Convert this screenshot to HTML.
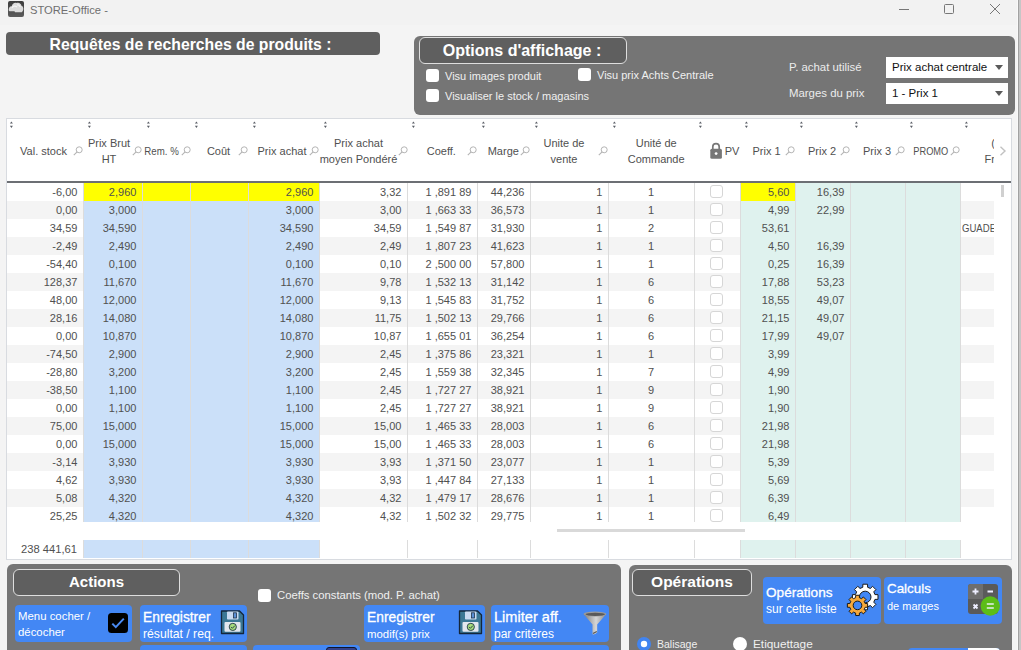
<!DOCTYPE html>
<html><head><meta charset="utf-8">
<style>
*{margin:0;padding:0;box-sizing:border-box}
html,body{width:1021px;height:650px;overflow:hidden;background:#f4f4f4;font-family:"Liberation Sans",sans-serif;position:relative}
.abs{position:absolute}
.bg{position:absolute}
.cell{position:absolute;height:18px;line-height:18px;font-size:11px;color:#505050;white-space:nowrap}
.pvcb{position:absolute;width:13px;height:13px;border:1px solid #d6d6d6;border-radius:3px;background:#fff}
.sort{position:absolute}
.srch{position:absolute}
.ht{position:absolute;width:120px;text-align:center;font-size:11px;line-height:16px;color:#505050;white-space:nowrap}
.hclip{position:absolute;overflow:hidden}
.panel{position:absolute;background:#757575;border-radius:6px}
.ttl{position:absolute;background:#5f5f5f;border:1px solid #dedede;border-radius:6px;color:#fff;font-weight:bold;text-align:center;white-space:nowrap}
.cb{position:absolute;width:13px;height:13px;background:#fff;border-radius:3px}
.lbl{position:absolute;color:#f0f0f0;font-size:11px;white-space:nowrap}
.btn{position:absolute;background:#4387f4;border-radius:4px;color:#fff;white-space:nowrap;overflow:hidden}
.btn .t1{position:absolute;font-size:14px;-webkit-text-stroke:0.3px #fff}
.btn .t2{position:absolute;font-size:12px}
.sel{position:absolute;background:#fff;font-size:11.5px;color:#111;white-space:nowrap}
.sel .arr{position:absolute;right:5px;top:8px;width:0;height:0;border-left:4px solid transparent;border-right:4px solid transparent;border-top:5px solid #5a5a5a}
</style></head>
<body>
<!-- title bar -->
<div class="bg" style="left:0;top:0;width:1021px;height:25px;background:#f2f2f2"></div>
<svg class="abs" style="left:8px;top:1px" width="16" height="16" viewBox="0 0 16 16">
 <defs><linearGradient id="ig" x1="0" x2="0" y1="0" y2="1"><stop offset="0" stop-color="#3c3c3c"/><stop offset="1" stop-color="#5c5c5c"/></linearGradient></defs><rect x="0" y="0" width="16" height="16" rx="2" fill="url(#ig)"/>
 <path d="M0.8 9.5 C0.3 7 1.8 5 3.8 5.2 C4.2 2.8 6.5 1.2 8.6 2 C10.8 1 13.2 2.5 13.4 4.8 C15.4 5.4 16 8.5 14.6 10.2 L13.8 11.2 L7 11.3 L6.5 10.2 L1.5 10.2Z" fill="#dcdcdc"/><path d="M4 7 C5 5 7 4.5 9 6 M9 4 C10.5 3.5 12 4.5 12 6" fill="none" stroke="#f4f4f4" stroke-width="1.2"/>
</svg>
<div class="abs" style="left:30px;top:3px;font-size:11.2px;color:#6f6f6f;line-height:14px">STORE-Office -</div>
<div class="bg" style="left:899px;top:9px;width:10px;height:1px;background:#777"></div>
<div class="bg" style="left:944px;top:4px;width:10px;height:10px;border:1px solid #777;border-radius:1.5px"></div>
<svg class="abs" style="left:989px;top:3px" width="12" height="12" viewBox="0 0 12 12"><path d="M1 1 L11 11 M11 1 L1 11" stroke="#777" stroke-width="1"/></svg>
<div class="bg" style="left:1017px;top:0;width:1px;height:650px;background:#f9f9f9"></div><div class="bg" style="left:1018px;top:0;width:1px;height:650px;background:#a2a2a2"></div><div class="bg" style="left:1019px;top:0;width:2px;height:650px;background:#c6c6c6"></div>

<!-- top header box -->
<div class="ttl" style="left:6px;top:32px;width:374px;height:23px;border:none;border-radius:4px;font-size:15.75px;line-height:25px;padding-right:5px">Requêtes de recherches de produits :</div>

<!-- options panel -->
<div class="panel" style="left:414px;top:36px;width:601px;height:79px"></div>
<div class="ttl" style="left:419px;top:37px;width:208px;height:27px;font-size:16px;line-height:25px;padding-right:2px">Options d'affichage :</div>
<div class="cb" style="left:426px;top:69px"></div>
<div class="lbl" style="left:445px;top:69px;line-height:14px">Visu images produit</div>
<div class="cb" style="left:578px;top:68px"></div>
<div class="lbl" style="left:597px;top:68px;line-height:14px">Visu prix Achts Centrale</div>
<div class="cb" style="left:426px;top:89px"></div>
<div class="lbl" style="left:445px;top:89px;line-height:14px">Visualiser le stock / magasins</div>
<div class="lbl" style="left:789px;top:60px;line-height:14px;font-size:11.4px;color:#ececec">P. achat utilisé</div>
<div class="lbl" style="left:789px;top:86px;line-height:14px;font-size:11.4px;color:#ececec">Marges du prix</div>
<div class="sel" style="left:886px;top:57px;width:122px;height:21px;line-height:20px;padding-left:6px">Prix achat centrale<div class="arr"></div></div>
<div class="sel" style="left:886px;top:83px;width:122px;height:21px;line-height:20px;padding-left:6px">1 - Prix 1<div class="arr"></div></div>

<!-- table -->
<div class="bg" style="left:6px;top:118px;width:1006px;height:442px;background:#fff;border:1px solid #d8dbe0"></div>
<div class="bg" style="left:7px;top:181px;width:1004px;height:2px;background:#6c6f74"></div>
<svg class="sort" style="left:9px;top:121px" width="5" height="8" viewBox="0 0 5 8"><path d="M0.9 2.6 L2.4 0.6 L3.9 2.6Z M0.9 4.8 L3.9 4.8 L2.4 7.1Z" fill="#5a5e66"/></svg>
<svg class="sort" style="left:87px;top:121px" width="5" height="8" viewBox="0 0 5 8"><path d="M0.9 2.6 L2.4 0.6 L3.9 2.6Z M0.9 4.8 L3.9 4.8 L2.4 7.1Z" fill="#5a5e66"/></svg>
<svg class="sort" style="left:146px;top:121px" width="5" height="8" viewBox="0 0 5 8"><path d="M0.9 2.6 L2.4 0.6 L3.9 2.6Z M0.9 4.8 L3.9 4.8 L2.4 7.1Z" fill="#5a5e66"/></svg>
<svg class="sort" style="left:194px;top:121px" width="5" height="8" viewBox="0 0 5 8"><path d="M0.9 2.6 L2.4 0.6 L3.9 2.6Z M0.9 4.8 L3.9 4.8 L2.4 7.1Z" fill="#5a5e66"/></svg>
<svg class="sort" style="left:252px;top:121px" width="5" height="8" viewBox="0 0 5 8"><path d="M0.9 2.6 L2.4 0.6 L3.9 2.6Z M0.9 4.8 L3.9 4.8 L2.4 7.1Z" fill="#5a5e66"/></svg>
<svg class="sort" style="left:323px;top:121px" width="5" height="8" viewBox="0 0 5 8"><path d="M0.9 2.6 L2.4 0.6 L3.9 2.6Z M0.9 4.8 L3.9 4.8 L2.4 7.1Z" fill="#5a5e66"/></svg>
<svg class="sort" style="left:411px;top:121px" width="5" height="8" viewBox="0 0 5 8"><path d="M0.9 2.6 L2.4 0.6 L3.9 2.6Z M0.9 4.8 L3.9 4.8 L2.4 7.1Z" fill="#5a5e66"/></svg>
<svg class="sort" style="left:481px;top:121px" width="5" height="8" viewBox="0 0 5 8"><path d="M0.9 2.6 L2.4 0.6 L3.9 2.6Z M0.9 4.8 L3.9 4.8 L2.4 7.1Z" fill="#5a5e66"/></svg>
<svg class="sort" style="left:534px;top:121px" width="5" height="8" viewBox="0 0 5 8"><path d="M0.9 2.6 L2.4 0.6 L3.9 2.6Z M0.9 4.8 L3.9 4.8 L2.4 7.1Z" fill="#5a5e66"/></svg>
<svg class="sort" style="left:612px;top:121px" width="5" height="8" viewBox="0 0 5 8"><path d="M0.9 2.6 L2.4 0.6 L3.9 2.6Z M0.9 4.8 L3.9 4.8 L2.4 7.1Z" fill="#5a5e66"/></svg>
<svg class="sort" style="left:698px;top:121px" width="5" height="8" viewBox="0 0 5 8"><path d="M0.9 2.6 L2.4 0.6 L3.9 2.6Z M0.9 4.8 L3.9 4.8 L2.4 7.1Z" fill="#5a5e66"/></svg>
<svg class="sort" style="left:744px;top:121px" width="5" height="8" viewBox="0 0 5 8"><path d="M0.9 2.6 L2.4 0.6 L3.9 2.6Z M0.9 4.8 L3.9 4.8 L2.4 7.1Z" fill="#5a5e66"/></svg>
<svg class="sort" style="left:799px;top:121px" width="5" height="8" viewBox="0 0 5 8"><path d="M0.9 2.6 L2.4 0.6 L3.9 2.6Z M0.9 4.8 L3.9 4.8 L2.4 7.1Z" fill="#5a5e66"/></svg>
<svg class="sort" style="left:854px;top:121px" width="5" height="8" viewBox="0 0 5 8"><path d="M0.9 2.6 L2.4 0.6 L3.9 2.6Z M0.9 4.8 L3.9 4.8 L2.4 7.1Z" fill="#5a5e66"/></svg>
<svg class="sort" style="left:909px;top:121px" width="5" height="8" viewBox="0 0 5 8"><path d="M0.9 2.6 L2.4 0.6 L3.9 2.6Z M0.9 4.8 L3.9 4.8 L2.4 7.1Z" fill="#5a5e66"/></svg>
<svg class="sort" style="left:964px;top:121px" width="5" height="8" viewBox="0 0 5 8"><path d="M0.9 2.6 L2.4 0.6 L3.9 2.6Z M0.9 4.8 L3.9 4.8 L2.4 7.1Z" fill="#5a5e66"/></svg>
<div class="ht" style="left:-16.5px;top:143px;">Val. stock</div>
<div class="ht" style="left:49px;top:135px">Prix Brut<br>HT</div>
<div class="ht" style="left:102px;top:143px;"><span style='display:inline-block;transform:scaleX(0.88)'>Rem. %</span></div>
<div class="ht" style="left:158.5px;top:143px;">Coût</div>
<div class="ht" style="left:222px;top:143px;">Prix achat</div>
<div class="ht" style="left:298.5px;top:135px">Prix achat<br>moyen Pondéré</div>
<div class="ht" style="left:381.3px;top:143px;">Coeff.</div>
<div class="ht" style="left:443.3px;top:143px;">Marge</div>
<div class="ht" style="left:504px;top:135px">Unite de<br>vente</div>
<div class="ht" style="left:596.2px;top:135px">Unité de<br>Commande</div>
<div class="ht" style="left:672px;top:143px;">PV</div>
<div class="ht" style="left:706.6px;top:143px;">Prix 1</div>
<div class="ht" style="left:762px;top:143px;">Prix 2</div>
<div class="ht" style="left:817px;top:143px;">Prix 3</div>
<div class="ht" style="left:871px;top:143px;"><span style='display:inline-block;transform:scaleX(0.84)'>PROMO</span></div>
<svg class="srch" style="left:73px;top:146px" width="10" height="10" viewBox="0 0 10 10"><circle cx="6.2" cy="3.8" r="3" fill="none" stroke="#b4b4b4" stroke-width="1"/><path d="M4.1 5.9 L0.8 9.2" stroke="#b4b4b4" stroke-width="1.1"/></svg>
<svg class="srch" style="left:132px;top:146px" width="10" height="10" viewBox="0 0 10 10"><circle cx="6.2" cy="3.8" r="3" fill="none" stroke="#b4b4b4" stroke-width="1"/><path d="M4.1 5.9 L0.8 9.2" stroke="#b4b4b4" stroke-width="1.1"/></svg>
<svg class="srch" style="left:180.5px;top:146px" width="10" height="10" viewBox="0 0 10 10"><circle cx="6.2" cy="3.8" r="3" fill="none" stroke="#b4b4b4" stroke-width="1"/><path d="M4.1 5.9 L0.8 9.2" stroke="#b4b4b4" stroke-width="1.1"/></svg>
<svg class="srch" style="left:238px;top:146px" width="10" height="10" viewBox="0 0 10 10"><circle cx="6.2" cy="3.8" r="3" fill="none" stroke="#b4b4b4" stroke-width="1"/><path d="M4.1 5.9 L0.8 9.2" stroke="#b4b4b4" stroke-width="1.1"/></svg>
<svg class="srch" style="left:309.3px;top:146px" width="10" height="10" viewBox="0 0 10 10"><circle cx="6.2" cy="3.8" r="3" fill="none" stroke="#b4b4b4" stroke-width="1"/><path d="M4.1 5.9 L0.8 9.2" stroke="#b4b4b4" stroke-width="1.1"/></svg>
<svg class="srch" style="left:397.5px;top:146px" width="10" height="10" viewBox="0 0 10 10"><circle cx="6.2" cy="3.8" r="3" fill="none" stroke="#b4b4b4" stroke-width="1"/><path d="M4.1 5.9 L0.8 9.2" stroke="#b4b4b4" stroke-width="1.1"/></svg>
<svg class="srch" style="left:467px;top:146px" width="10" height="10" viewBox="0 0 10 10"><circle cx="6.2" cy="3.8" r="3" fill="none" stroke="#b4b4b4" stroke-width="1"/><path d="M4.1 5.9 L0.8 9.2" stroke="#b4b4b4" stroke-width="1.1"/></svg>
<svg class="srch" style="left:520px;top:146px" width="10" height="10" viewBox="0 0 10 10"><circle cx="6.2" cy="3.8" r="3" fill="none" stroke="#b4b4b4" stroke-width="1"/><path d="M4.1 5.9 L0.8 9.2" stroke="#b4b4b4" stroke-width="1.1"/></svg>
<svg class="srch" style="left:598.3px;top:146px" width="10" height="10" viewBox="0 0 10 10"><circle cx="6.2" cy="3.8" r="3" fill="none" stroke="#b4b4b4" stroke-width="1"/><path d="M4.1 5.9 L0.8 9.2" stroke="#b4b4b4" stroke-width="1.1"/></svg>
<svg class="srch" style="left:785px;top:146px" width="10" height="10" viewBox="0 0 10 10"><circle cx="6.2" cy="3.8" r="3" fill="none" stroke="#b4b4b4" stroke-width="1"/><path d="M4.1 5.9 L0.8 9.2" stroke="#b4b4b4" stroke-width="1.1"/></svg>
<svg class="srch" style="left:840px;top:146px" width="10" height="10" viewBox="0 0 10 10"><circle cx="6.2" cy="3.8" r="3" fill="none" stroke="#b4b4b4" stroke-width="1"/><path d="M4.1 5.9 L0.8 9.2" stroke="#b4b4b4" stroke-width="1.1"/></svg>
<svg class="srch" style="left:895px;top:146px" width="10" height="10" viewBox="0 0 10 10"><circle cx="6.2" cy="3.8" r="3" fill="none" stroke="#b4b4b4" stroke-width="1"/><path d="M4.1 5.9 L0.8 9.2" stroke="#b4b4b4" stroke-width="1.1"/></svg>
<svg class="srch" style="left:950px;top:146px" width="10" height="10" viewBox="0 0 10 10"><circle cx="6.2" cy="3.8" r="3" fill="none" stroke="#b4b4b4" stroke-width="1"/><path d="M4.1 5.9 L0.8 9.2" stroke="#b4b4b4" stroke-width="1.1"/></svg>
<div class="hclip" style="left:961px;top:119px;width:33px;height:62px"><div class="ht" style="left:-30px;top:16px;width:64px;text-align:right">(<br>Fr</div></div>
<svg class="srch" style="left:999px;top:146px" width="8" height="10" viewBox="0 0 8 10"><path d="M1.5 0.8 L6 5 L1.5 9.2" fill="none" stroke="#c2c2c2" stroke-width="1.4"/></svg>
<svg class="srch" style="left:709px;top:142px" width="14" height="18" viewBox="0 0 14 18"><path d="M3.8 7 V4.8 A3.2 3.2 0 0 1 10.2 4.8 V7" fill="none" stroke="#777" stroke-width="1.7"/><rect x="1.3" y="6.8" width="11.6" height="10" rx="1.5" fill="#777"/><circle cx="7.1" cy="11.6" r="1.4" fill="#fff"/></svg>
<div class="bg" style="left:84px;top:183px;width:235px;height:18px;background:#ffff00"></div>
<div class="bg" style="left:741px;top:183px;width:54px;height:18px;background:#ffff00"></div>
<div class="bg" style="left:7px;top:201px;width:987px;height:18px;background:#f4f4f4"></div>
<div class="bg" style="left:7px;top:237px;width:987px;height:18px;background:#f4f4f4"></div>
<div class="bg" style="left:7px;top:273px;width:987px;height:18px;background:#f4f4f4"></div>
<div class="bg" style="left:7px;top:309px;width:987px;height:18px;background:#f4f4f4"></div>
<div class="bg" style="left:7px;top:345px;width:987px;height:18px;background:#f4f4f4"></div>
<div class="bg" style="left:7px;top:381px;width:987px;height:18px;background:#f4f4f4"></div>
<div class="bg" style="left:7px;top:417px;width:987px;height:18px;background:#f4f4f4"></div>
<div class="bg" style="left:7px;top:453px;width:987px;height:18px;background:#f4f4f4"></div>
<div class="bg" style="left:7px;top:489px;width:987px;height:18px;background:#f4f4f4"></div>
<div class="bg" style="left:84px;top:201px;width:235px;height:321px;background:#cbe0f9"></div>
<div class="bg" style="left:741px;top:201px;width:54px;height:321px;background:#dff2ee"></div>
<div class="bg" style="left:796px;top:183px;width:164px;height:339px;background:#dff2ee"></div>
<div class="bg" style="left:84px;top:540px;width:235px;height:18px;background:#cbe0f9"></div>
<div class="bg" style="left:741px;top:540px;width:219px;height:18px;background:#dff2ee"></div>
<div class="bg" style="left:83px;top:183px;width:1px;height:339px;background:#dcdcdc"></div>
<div class="bg" style="left:83px;top:540px;width:1px;height:18px;background:#dcdcdc"></div>
<div class="bg" style="left:142px;top:183px;width:1px;height:339px;background:#dcdcdc"></div>
<div class="bg" style="left:142px;top:540px;width:1px;height:18px;background:#dcdcdc"></div>
<div class="bg" style="left:190px;top:183px;width:1px;height:339px;background:#dcdcdc"></div>
<div class="bg" style="left:190px;top:540px;width:1px;height:18px;background:#dcdcdc"></div>
<div class="bg" style="left:248px;top:183px;width:1px;height:339px;background:#dcdcdc"></div>
<div class="bg" style="left:248px;top:540px;width:1px;height:18px;background:#dcdcdc"></div>
<div class="bg" style="left:319px;top:183px;width:1px;height:339px;background:#dcdcdc"></div>
<div class="bg" style="left:319px;top:540px;width:1px;height:18px;background:#dcdcdc"></div>
<div class="bg" style="left:407px;top:183px;width:1px;height:339px;background:#dcdcdc"></div>
<div class="bg" style="left:407px;top:540px;width:1px;height:18px;background:#dcdcdc"></div>
<div class="bg" style="left:477px;top:183px;width:1px;height:339px;background:#dcdcdc"></div>
<div class="bg" style="left:477px;top:540px;width:1px;height:18px;background:#dcdcdc"></div>
<div class="bg" style="left:530px;top:183px;width:1px;height:339px;background:#dcdcdc"></div>
<div class="bg" style="left:530px;top:540px;width:1px;height:18px;background:#dcdcdc"></div>
<div class="bg" style="left:608px;top:183px;width:1px;height:339px;background:#dcdcdc"></div>
<div class="bg" style="left:608px;top:540px;width:1px;height:18px;background:#dcdcdc"></div>
<div class="bg" style="left:694px;top:183px;width:1px;height:339px;background:#dcdcdc"></div>
<div class="bg" style="left:694px;top:540px;width:1px;height:18px;background:#dcdcdc"></div>
<div class="bg" style="left:740px;top:183px;width:1px;height:339px;background:#dcdcdc"></div>
<div class="bg" style="left:740px;top:540px;width:1px;height:18px;background:#dcdcdc"></div>
<div class="bg" style="left:795px;top:183px;width:1px;height:339px;background:#dcdcdc"></div>
<div class="bg" style="left:795px;top:540px;width:1px;height:18px;background:#dcdcdc"></div>
<div class="bg" style="left:850px;top:183px;width:1px;height:339px;background:#dcdcdc"></div>
<div class="bg" style="left:850px;top:540px;width:1px;height:18px;background:#dcdcdc"></div>
<div class="bg" style="left:905px;top:183px;width:1px;height:339px;background:#dcdcdc"></div>
<div class="bg" style="left:905px;top:540px;width:1px;height:18px;background:#dcdcdc"></div>
<div class="bg" style="left:960px;top:183px;width:1px;height:339px;background:#dcdcdc"></div>
<div class="bg" style="left:960px;top:540px;width:1px;height:18px;background:#dcdcdc"></div>
<div class="cell" style="left:7px;top:183px;width:70.4px;text-align:right">-6,00</div>
<div class="cell" style="left:83px;top:183px;width:53.4px;text-align:right">2,960</div>
<div class="cell" style="left:248px;top:183px;width:65.4px;text-align:right">2,960</div>
<div class="cell" style="left:319px;top:183px;width:82.4px;text-align:right">3,32</div>
<div class="cell" style="left:407px;top:183px;width:64.4px;text-align:right">1 ,891 89</div>
<div class="cell" style="left:477px;top:183px;width:47.4px;text-align:right">44,236</div>
<div class="cell" style="left:530px;top:183px;width:72.4px;text-align:right">1</div>
<div class="cell" style="left:608px;top:183px;width:86px;text-align:center">1</div>
<div class="cell" style="left:740px;top:183px;width:49.4px;text-align:right">5,60</div>
<div class="cell" style="left:795px;top:183px;width:49.4px;text-align:right">16,39</div>
<div class="pvcb" style="left:710px;top:185px"></div>
<div class="cell" style="left:7px;top:201px;width:70.4px;text-align:right">0,00</div>
<div class="cell" style="left:83px;top:201px;width:53.4px;text-align:right">3,000</div>
<div class="cell" style="left:248px;top:201px;width:65.4px;text-align:right">3,000</div>
<div class="cell" style="left:319px;top:201px;width:82.4px;text-align:right">3,00</div>
<div class="cell" style="left:407px;top:201px;width:64.4px;text-align:right">1 ,663 33</div>
<div class="cell" style="left:477px;top:201px;width:47.4px;text-align:right">36,573</div>
<div class="cell" style="left:530px;top:201px;width:72.4px;text-align:right">1</div>
<div class="cell" style="left:608px;top:201px;width:86px;text-align:center">1</div>
<div class="cell" style="left:740px;top:201px;width:49.4px;text-align:right">4,99</div>
<div class="cell" style="left:795px;top:201px;width:49.4px;text-align:right">22,99</div>
<div class="pvcb" style="left:710px;top:203px"></div>
<div class="cell" style="left:7px;top:219px;width:70.4px;text-align:right">34,59</div>
<div class="cell" style="left:83px;top:219px;width:53.4px;text-align:right">34,590</div>
<div class="cell" style="left:248px;top:219px;width:65.4px;text-align:right">34,590</div>
<div class="cell" style="left:319px;top:219px;width:82.4px;text-align:right">34,59</div>
<div class="cell" style="left:407px;top:219px;width:64.4px;text-align:right">1 ,549 87</div>
<div class="cell" style="left:477px;top:219px;width:47.4px;text-align:right">31,930</div>
<div class="cell" style="left:530px;top:219px;width:72.4px;text-align:right">1</div>
<div class="cell" style="left:608px;top:219px;width:86px;text-align:center">2</div>
<div class="cell" style="left:740px;top:219px;width:49.4px;text-align:right">53,61</div>
<div class="cell" style="left:962px;top:219px;width:32px;text-align:left;overflow:hidden"><span style="display:inline-block;transform:scaleX(0.87);transform-origin:0 0">GUADE</span></div>
<div class="pvcb" style="left:710px;top:221px"></div>
<div class="cell" style="left:7px;top:237px;width:70.4px;text-align:right">-2,49</div>
<div class="cell" style="left:83px;top:237px;width:53.4px;text-align:right">2,490</div>
<div class="cell" style="left:248px;top:237px;width:65.4px;text-align:right">2,490</div>
<div class="cell" style="left:319px;top:237px;width:82.4px;text-align:right">2,49</div>
<div class="cell" style="left:407px;top:237px;width:64.4px;text-align:right">1 ,807 23</div>
<div class="cell" style="left:477px;top:237px;width:47.4px;text-align:right">41,623</div>
<div class="cell" style="left:530px;top:237px;width:72.4px;text-align:right">1</div>
<div class="cell" style="left:608px;top:237px;width:86px;text-align:center">1</div>
<div class="cell" style="left:740px;top:237px;width:49.4px;text-align:right">4,50</div>
<div class="cell" style="left:795px;top:237px;width:49.4px;text-align:right">16,39</div>
<div class="pvcb" style="left:710px;top:239px"></div>
<div class="cell" style="left:7px;top:255px;width:70.4px;text-align:right">-54,40</div>
<div class="cell" style="left:83px;top:255px;width:53.4px;text-align:right">0,100</div>
<div class="cell" style="left:248px;top:255px;width:65.4px;text-align:right">0,100</div>
<div class="cell" style="left:319px;top:255px;width:82.4px;text-align:right">0,10</div>
<div class="cell" style="left:407px;top:255px;width:64.4px;text-align:right">2 ,500 00</div>
<div class="cell" style="left:477px;top:255px;width:47.4px;text-align:right">57,800</div>
<div class="cell" style="left:530px;top:255px;width:72.4px;text-align:right">1</div>
<div class="cell" style="left:608px;top:255px;width:86px;text-align:center">1</div>
<div class="cell" style="left:740px;top:255px;width:49.4px;text-align:right">0,25</div>
<div class="cell" style="left:795px;top:255px;width:49.4px;text-align:right">16,39</div>
<div class="pvcb" style="left:710px;top:257px"></div>
<div class="cell" style="left:7px;top:273px;width:70.4px;text-align:right">128,37</div>
<div class="cell" style="left:83px;top:273px;width:53.4px;text-align:right">11,670</div>
<div class="cell" style="left:248px;top:273px;width:65.4px;text-align:right">11,670</div>
<div class="cell" style="left:319px;top:273px;width:82.4px;text-align:right">9,78</div>
<div class="cell" style="left:407px;top:273px;width:64.4px;text-align:right">1 ,532 13</div>
<div class="cell" style="left:477px;top:273px;width:47.4px;text-align:right">31,142</div>
<div class="cell" style="left:530px;top:273px;width:72.4px;text-align:right">1</div>
<div class="cell" style="left:608px;top:273px;width:86px;text-align:center">6</div>
<div class="cell" style="left:740px;top:273px;width:49.4px;text-align:right">17,88</div>
<div class="cell" style="left:795px;top:273px;width:49.4px;text-align:right">53,23</div>
<div class="pvcb" style="left:710px;top:275px"></div>
<div class="cell" style="left:7px;top:291px;width:70.4px;text-align:right">48,00</div>
<div class="cell" style="left:83px;top:291px;width:53.4px;text-align:right">12,000</div>
<div class="cell" style="left:248px;top:291px;width:65.4px;text-align:right">12,000</div>
<div class="cell" style="left:319px;top:291px;width:82.4px;text-align:right">9,13</div>
<div class="cell" style="left:407px;top:291px;width:64.4px;text-align:right">1 ,545 83</div>
<div class="cell" style="left:477px;top:291px;width:47.4px;text-align:right">31,752</div>
<div class="cell" style="left:530px;top:291px;width:72.4px;text-align:right">1</div>
<div class="cell" style="left:608px;top:291px;width:86px;text-align:center">6</div>
<div class="cell" style="left:740px;top:291px;width:49.4px;text-align:right">18,55</div>
<div class="cell" style="left:795px;top:291px;width:49.4px;text-align:right">49,07</div>
<div class="pvcb" style="left:710px;top:293px"></div>
<div class="cell" style="left:7px;top:309px;width:70.4px;text-align:right">28,16</div>
<div class="cell" style="left:83px;top:309px;width:53.4px;text-align:right">14,080</div>
<div class="cell" style="left:248px;top:309px;width:65.4px;text-align:right">14,080</div>
<div class="cell" style="left:319px;top:309px;width:82.4px;text-align:right">11,75</div>
<div class="cell" style="left:407px;top:309px;width:64.4px;text-align:right">1 ,502 13</div>
<div class="cell" style="left:477px;top:309px;width:47.4px;text-align:right">29,766</div>
<div class="cell" style="left:530px;top:309px;width:72.4px;text-align:right">1</div>
<div class="cell" style="left:608px;top:309px;width:86px;text-align:center">6</div>
<div class="cell" style="left:740px;top:309px;width:49.4px;text-align:right">21,15</div>
<div class="cell" style="left:795px;top:309px;width:49.4px;text-align:right">49,07</div>
<div class="pvcb" style="left:710px;top:311px"></div>
<div class="cell" style="left:7px;top:327px;width:70.4px;text-align:right">0,00</div>
<div class="cell" style="left:83px;top:327px;width:53.4px;text-align:right">10,870</div>
<div class="cell" style="left:248px;top:327px;width:65.4px;text-align:right">10,870</div>
<div class="cell" style="left:319px;top:327px;width:82.4px;text-align:right">10,87</div>
<div class="cell" style="left:407px;top:327px;width:64.4px;text-align:right">1 ,655 01</div>
<div class="cell" style="left:477px;top:327px;width:47.4px;text-align:right">36,254</div>
<div class="cell" style="left:530px;top:327px;width:72.4px;text-align:right">1</div>
<div class="cell" style="left:608px;top:327px;width:86px;text-align:center">6</div>
<div class="cell" style="left:740px;top:327px;width:49.4px;text-align:right">17,99</div>
<div class="cell" style="left:795px;top:327px;width:49.4px;text-align:right">49,07</div>
<div class="pvcb" style="left:710px;top:329px"></div>
<div class="cell" style="left:7px;top:345px;width:70.4px;text-align:right">-74,50</div>
<div class="cell" style="left:83px;top:345px;width:53.4px;text-align:right">2,900</div>
<div class="cell" style="left:248px;top:345px;width:65.4px;text-align:right">2,900</div>
<div class="cell" style="left:319px;top:345px;width:82.4px;text-align:right">2,45</div>
<div class="cell" style="left:407px;top:345px;width:64.4px;text-align:right">1 ,375 86</div>
<div class="cell" style="left:477px;top:345px;width:47.4px;text-align:right">23,321</div>
<div class="cell" style="left:530px;top:345px;width:72.4px;text-align:right">1</div>
<div class="cell" style="left:608px;top:345px;width:86px;text-align:center">1</div>
<div class="cell" style="left:740px;top:345px;width:49.4px;text-align:right">3,99</div>
<div class="pvcb" style="left:710px;top:347px"></div>
<div class="cell" style="left:7px;top:363px;width:70.4px;text-align:right">-28,80</div>
<div class="cell" style="left:83px;top:363px;width:53.4px;text-align:right">3,200</div>
<div class="cell" style="left:248px;top:363px;width:65.4px;text-align:right">3,200</div>
<div class="cell" style="left:319px;top:363px;width:82.4px;text-align:right">2,45</div>
<div class="cell" style="left:407px;top:363px;width:64.4px;text-align:right">1 ,559 38</div>
<div class="cell" style="left:477px;top:363px;width:47.4px;text-align:right">32,345</div>
<div class="cell" style="left:530px;top:363px;width:72.4px;text-align:right">1</div>
<div class="cell" style="left:608px;top:363px;width:86px;text-align:center">7</div>
<div class="cell" style="left:740px;top:363px;width:49.4px;text-align:right">4,99</div>
<div class="pvcb" style="left:710px;top:365px"></div>
<div class="cell" style="left:7px;top:381px;width:70.4px;text-align:right">-38,50</div>
<div class="cell" style="left:83px;top:381px;width:53.4px;text-align:right">1,100</div>
<div class="cell" style="left:248px;top:381px;width:65.4px;text-align:right">1,100</div>
<div class="cell" style="left:319px;top:381px;width:82.4px;text-align:right">2,45</div>
<div class="cell" style="left:407px;top:381px;width:64.4px;text-align:right">1 ,727 27</div>
<div class="cell" style="left:477px;top:381px;width:47.4px;text-align:right">38,921</div>
<div class="cell" style="left:530px;top:381px;width:72.4px;text-align:right">1</div>
<div class="cell" style="left:608px;top:381px;width:86px;text-align:center">9</div>
<div class="cell" style="left:740px;top:381px;width:49.4px;text-align:right">1,90</div>
<div class="pvcb" style="left:710px;top:383px"></div>
<div class="cell" style="left:7px;top:399px;width:70.4px;text-align:right">0,00</div>
<div class="cell" style="left:83px;top:399px;width:53.4px;text-align:right">1,100</div>
<div class="cell" style="left:248px;top:399px;width:65.4px;text-align:right">1,100</div>
<div class="cell" style="left:319px;top:399px;width:82.4px;text-align:right">2,45</div>
<div class="cell" style="left:407px;top:399px;width:64.4px;text-align:right">1 ,727 27</div>
<div class="cell" style="left:477px;top:399px;width:47.4px;text-align:right">38,921</div>
<div class="cell" style="left:530px;top:399px;width:72.4px;text-align:right">1</div>
<div class="cell" style="left:608px;top:399px;width:86px;text-align:center">9</div>
<div class="cell" style="left:740px;top:399px;width:49.4px;text-align:right">1,90</div>
<div class="pvcb" style="left:710px;top:401px"></div>
<div class="cell" style="left:7px;top:417px;width:70.4px;text-align:right">75,00</div>
<div class="cell" style="left:83px;top:417px;width:53.4px;text-align:right">15,000</div>
<div class="cell" style="left:248px;top:417px;width:65.4px;text-align:right">15,000</div>
<div class="cell" style="left:319px;top:417px;width:82.4px;text-align:right">15,00</div>
<div class="cell" style="left:407px;top:417px;width:64.4px;text-align:right">1 ,465 33</div>
<div class="cell" style="left:477px;top:417px;width:47.4px;text-align:right">28,003</div>
<div class="cell" style="left:530px;top:417px;width:72.4px;text-align:right">1</div>
<div class="cell" style="left:608px;top:417px;width:86px;text-align:center">6</div>
<div class="cell" style="left:740px;top:417px;width:49.4px;text-align:right">21,98</div>
<div class="pvcb" style="left:710px;top:419px"></div>
<div class="cell" style="left:7px;top:435px;width:70.4px;text-align:right">0,00</div>
<div class="cell" style="left:83px;top:435px;width:53.4px;text-align:right">15,000</div>
<div class="cell" style="left:248px;top:435px;width:65.4px;text-align:right">15,000</div>
<div class="cell" style="left:319px;top:435px;width:82.4px;text-align:right">15,00</div>
<div class="cell" style="left:407px;top:435px;width:64.4px;text-align:right">1 ,465 33</div>
<div class="cell" style="left:477px;top:435px;width:47.4px;text-align:right">28,003</div>
<div class="cell" style="left:530px;top:435px;width:72.4px;text-align:right">1</div>
<div class="cell" style="left:608px;top:435px;width:86px;text-align:center">6</div>
<div class="cell" style="left:740px;top:435px;width:49.4px;text-align:right">21,98</div>
<div class="pvcb" style="left:710px;top:437px"></div>
<div class="cell" style="left:7px;top:453px;width:70.4px;text-align:right">-3,14</div>
<div class="cell" style="left:83px;top:453px;width:53.4px;text-align:right">3,930</div>
<div class="cell" style="left:248px;top:453px;width:65.4px;text-align:right">3,930</div>
<div class="cell" style="left:319px;top:453px;width:82.4px;text-align:right">3,93</div>
<div class="cell" style="left:407px;top:453px;width:64.4px;text-align:right">1 ,371 50</div>
<div class="cell" style="left:477px;top:453px;width:47.4px;text-align:right">23,077</div>
<div class="cell" style="left:530px;top:453px;width:72.4px;text-align:right">1</div>
<div class="cell" style="left:608px;top:453px;width:86px;text-align:center">1</div>
<div class="cell" style="left:740px;top:453px;width:49.4px;text-align:right">5,39</div>
<div class="pvcb" style="left:710px;top:455px"></div>
<div class="cell" style="left:7px;top:471px;width:70.4px;text-align:right">4,62</div>
<div class="cell" style="left:83px;top:471px;width:53.4px;text-align:right">3,930</div>
<div class="cell" style="left:248px;top:471px;width:65.4px;text-align:right">3,930</div>
<div class="cell" style="left:319px;top:471px;width:82.4px;text-align:right">3,93</div>
<div class="cell" style="left:407px;top:471px;width:64.4px;text-align:right">1 ,447 84</div>
<div class="cell" style="left:477px;top:471px;width:47.4px;text-align:right">27,133</div>
<div class="cell" style="left:530px;top:471px;width:72.4px;text-align:right">1</div>
<div class="cell" style="left:608px;top:471px;width:86px;text-align:center">1</div>
<div class="cell" style="left:740px;top:471px;width:49.4px;text-align:right">5,69</div>
<div class="pvcb" style="left:710px;top:473px"></div>
<div class="cell" style="left:7px;top:489px;width:70.4px;text-align:right">5,08</div>
<div class="cell" style="left:83px;top:489px;width:53.4px;text-align:right">4,320</div>
<div class="cell" style="left:248px;top:489px;width:65.4px;text-align:right">4,320</div>
<div class="cell" style="left:319px;top:489px;width:82.4px;text-align:right">4,32</div>
<div class="cell" style="left:407px;top:489px;width:64.4px;text-align:right">1 ,479 17</div>
<div class="cell" style="left:477px;top:489px;width:47.4px;text-align:right">28,676</div>
<div class="cell" style="left:530px;top:489px;width:72.4px;text-align:right">1</div>
<div class="cell" style="left:608px;top:489px;width:86px;text-align:center">1</div>
<div class="cell" style="left:740px;top:489px;width:49.4px;text-align:right">6,39</div>
<div class="pvcb" style="left:710px;top:491px"></div>
<div class="cell" style="left:7px;top:507px;width:70.4px;text-align:right">25,25</div>
<div class="cell" style="left:83px;top:507px;width:53.4px;text-align:right">4,320</div>
<div class="cell" style="left:248px;top:507px;width:65.4px;text-align:right">4,320</div>
<div class="cell" style="left:319px;top:507px;width:82.4px;text-align:right">4,32</div>
<div class="cell" style="left:407px;top:507px;width:64.4px;text-align:right">1 ,502 32</div>
<div class="cell" style="left:477px;top:507px;width:47.4px;text-align:right">29,775</div>
<div class="cell" style="left:530px;top:507px;width:72.4px;text-align:right">1</div>
<div class="cell" style="left:608px;top:507px;width:86px;text-align:center">1</div>
<div class="cell" style="left:740px;top:507px;width:49.4px;text-align:right">6,49</div>
<div class="pvcb" style="left:710px;top:509px"></div>
<!-- horizontal scrollbar -->
<div class="bg" style="left:557px;top:529px;width:188px;height:3px;background:#d9d9d9"></div>
<!-- vertical scrollbar thumb -->
<div class="bg" style="left:1001px;top:185px;width:3px;height:12px;background:#d0d0d0"></div>
<div class="cell" style="left:7px;top:540px;width:70px;text-align:right;font-size:11.2px">238 441,61</div>

<!-- Actions panel -->
<div class="panel" style="left:7px;top:564px;width:614px;height:100px"></div>
<div class="ttl" style="left:13px;top:569px;width:167px;height:27px;font-size:15px;line-height:23px">Actions</div>
<div class="cb" style="left:258px;top:589px"></div>
<div class="lbl" style="left:277px;top:588px;line-height:14px;font-size:11.3px">Coeffs constants (mod. P. achat)</div>

<div class="btn" style="left:15px;top:605px;width:117px;height:37px">
 <div class="abs" style="left:3px;top:3px;font-size:11.4px;line-height:16px">Menu cocher /<br>décocher</div>
 <svg class="abs" style="left:93px;top:8px" width="20" height="20" viewBox="0 0 20 20"><rect x="0" y="0" width="20" height="20" rx="3.5" fill="#000"/><path d="M4.3 10.6 L7.8 14.1 L15.8 5.6" fill="none" stroke="#4a8af2" stroke-width="2"/></svg>
</div>
<div class="btn" style="left:140px;top:605px;width:107px;height:37px">
 <div class="t1" style="left:3px;top:5px;line-height:15px;font-size:13.8px">Enregistrer</div>
 <div class="t2" style="left:3px;top:22px;line-height:14px;font-size:12.2px">résultat / req.</div>
 <svg class="abs" style="left:80px;top:5px" width="25" height="25" viewBox="0 0 25 25">
  <path d="M1.5 1 H19.5 L23.5 5 V23.5 H1.5 Z" fill="#3b7795" stroke="#14263a" stroke-width="1.3" stroke-linejoin="round"/>
  <rect x="7" y="1.5" width="11.5" height="8" rx="0.8" fill="#c9daf2"/>
  <rect x="13.5" y="2.8" width="3" height="5.2" fill="#5b8fd6" stroke="#20344a" stroke-width="0.8"/>
  <rect x="4.5" y="12" width="16" height="9.8" rx="1" fill="#e3e7ef"/>
  <circle cx="12.8" cy="16.9" r="3.6" fill="#a6dc7c" stroke="#20344a" stroke-width="0.9"/>
  <path d="M11 16.9 L12.4 18.3 L14.8 15.7" fill="none" stroke="#20344a" stroke-width="0.9"/>
 </svg>
</div>
<div class="btn" style="left:364px;top:605px;width:121px;height:37px">
 <div class="t1" style="left:3px;top:5px;line-height:15px;font-size:13.8px">Enregistrer</div>
 <div class="t2" style="left:3px;top:22px;line-height:14px;font-size:11.4px">modif(s) prix</div>
 <svg class="abs" style="left:94px;top:5px" width="25" height="25" viewBox="0 0 25 25">
  <path d="M1.5 1 H19.5 L23.5 5 V23.5 H1.5 Z" fill="#3b7795" stroke="#14263a" stroke-width="1.3" stroke-linejoin="round"/>
  <rect x="7" y="1.5" width="11.5" height="8" rx="0.8" fill="#c9daf2"/>
  <rect x="13.5" y="2.8" width="3" height="5.2" fill="#5b8fd6" stroke="#20344a" stroke-width="0.8"/>
  <rect x="4.5" y="12" width="16" height="9.8" rx="1" fill="#e3e7ef"/>
  <circle cx="12.8" cy="16.9" r="3.6" fill="#a6dc7c" stroke="#20344a" stroke-width="0.9"/>
  <path d="M11 16.9 L12.4 18.3 L14.8 15.7" fill="none" stroke="#20344a" stroke-width="0.9"/>
 </svg>
</div>
<div class="btn" style="left:491px;top:605px;width:118px;height:37px">
 <div class="t1" style="left:3px;top:5px;line-height:15px;font-size:14.6px">Limiter aff.</div>
 <div class="t2" style="left:3px;top:22px;line-height:14px;font-size:12px">par critères</div>
 <svg class="abs" style="left:92px;top:6px" width="24" height="25" viewBox="0 0 24 25">
  <defs><linearGradient id="fg" x1="0" x2="1" y1="0" y2="0"><stop offset="0" stop-color="#7a7a7a"/><stop offset="0.55" stop-color="#d6d6d6"/><stop offset="1" stop-color="#8a8a8a"/></linearGradient></defs>
  <path d="M0.5 3 L9.5 13.5 L9.5 23 Q10.5 24.5 14.2 21.5 L14.2 13.5 L23.3 3 Z" fill="url(#fg)"/>
  <ellipse cx="11.9" cy="3" rx="11.4" ry="2.4" fill="#9a9a9a"/>
  <ellipse cx="12.3" cy="3.3" rx="9.8" ry="1.6" fill="#595959"/>
  <path d="M10 22.5 L13.8 20.5" stroke="#555" stroke-width="1.3"/>
 </svg>
</div>
<div class="btn" style="left:140px;top:645px;width:107px;height:20px"></div>
<div class="btn" style="left:253px;top:645px;width:107px;height:20px"><div class="abs" style="left:73px;top:2px;width:31px;height:10px;background:#34418a;border:1.5px solid #10162a;border-radius:3px"></div></div>
<div class="btn" style="left:491px;top:645px;width:118px;height:20px"></div>

<!-- Operations panel -->
<div class="panel" style="left:629px;top:565px;width:383px;height:100px"></div>
<div class="ttl" style="left:632px;top:569px;width:120px;height:27px;font-size:15.5px;line-height:23px">Opérations</div>
<div class="btn" style="left:763px;top:577px;width:118px;height:47px">
 <div class="t1" style="left:3px;top:8px;line-height:16px;font-size:13.6px">Opérations</div>
 <div class="t2" style="left:3px;top:25px;line-height:14px;font-size:12px">sur cette liste</div>
 <svg class="abs" style="left:83px;top:5px" width="36" height="36" viewBox="0 0 36 36">
 <path d="M28.91 12.59 L31.99 12.66 L31.99 17.34 L28.91 17.41 L27.77 20.16 L29.89 22.39 L26.59 25.69 L24.36 23.57 L21.61 24.71 L21.54 27.79 L16.86 27.79 L16.79 24.71 L14.04 23.57 L11.81 25.69 L8.51 22.39 L10.63 20.16 L9.49 17.41 L6.41 17.34 L6.41 12.66 L9.49 12.59 L10.63 9.84 L8.51 7.61 L11.81 4.31 L14.04 6.43 L16.79 5.29 L16.86 2.21 L21.54 2.21 L21.61 5.29 L24.36 6.43 L26.59 4.31 L29.89 7.61 L27.77 9.84Z M25.00 15.00 A5.8 5.8 0 1 0 13.40 15.00 A5.8 5.8 0 1 0 25.00 15.00Z" fill="#ffffff" fill-rule="evenodd" stroke="#1a1a1a" stroke-width="1" stroke-linejoin="round"/>
 <path d="M19.17 21.50 L21.63 21.55 L21.63 25.25 L19.17 25.30 L18.27 27.47 L19.97 29.26 L17.36 31.87 L15.57 30.17 L13.40 31.07 L13.35 33.53 L9.65 33.53 L9.60 31.07 L7.43 30.17 L5.64 31.87 L3.03 29.26 L4.73 27.47 L3.83 25.30 L1.37 25.25 L1.37 21.55 L3.83 21.50 L4.73 19.33 L3.03 17.54 L5.64 14.93 L7.43 16.63 L9.60 15.73 L9.65 13.27 L13.35 13.27 L13.40 15.73 L15.57 16.63 L17.36 14.93 L19.97 17.54 L18.27 19.33Z" fill="#f6a93b" stroke="#1a1a1a" stroke-width="1" stroke-linejoin="round"/><circle cx="11.5" cy="23.4" r="4.3" fill="#4387f4" stroke="#1a1a1a" stroke-width="1"/>
</svg>
</div>
<div class="btn" style="left:884px;top:577px;width:118px;height:47px">
 <div class="t1" style="left:3px;top:4px;line-height:16px;font-size:13.4px">Calculs</div>
 <div class="t2" style="left:3px;top:22px;line-height:14px;font-size:11px">de marges</div>
 <svg class="abs" style="left:83px;top:6px" width="34" height="34" viewBox="0 0 34 34">
  <rect x="1" y="1" width="30" height="30" rx="3" fill="#5a5a5a"/>
  <path d="M1 16 V4 Q1 1 4 1 H16 V16 Z" fill="#6e6e6e"/>
  <path d="M8.5 5.5 V11.5 M5.5 8.5 H11.5" stroke="#eef" stroke-width="1.8"/>
  <path d="M20.5 8.5 H26" stroke="#eef" stroke-width="1.8"/>
  <path d="M6.5 21.5 L10.5 25.5 M10.5 21.5 L6.5 25.5" stroke="#eef" stroke-width="1.8"/>
  <circle cx="23.3" cy="23" r="9.7" fill="#5cbd18"/>
  <path d="M19.8 21 H26.8 M19.8 25 H26.8" stroke="#e6eef0" stroke-width="1.6"/>
 </svg>
</div>
<svg class="abs" style="left:637px;top:637px" width="14" height="14" viewBox="0 0 14 14"><circle cx="7" cy="7" r="7" fill="#4184f0"/><circle cx="7" cy="7" r="3.2" fill="#fff"/></svg>
<div class="lbl" style="left:657px;top:637px;line-height:14px;font-size:10.5px">Balisage</div>
<svg class="abs" style="left:733px;top:637px" width="14" height="14" viewBox="0 0 14 14"><circle cx="7" cy="7" r="7" fill="#fff"/></svg>
<div class="lbl" style="left:753px;top:637px;line-height:14px;font-size:11.8px">Etiquettage</div>
<div class="btn" style="left:908px;top:648px;width:92px;height:10px"><div class="abs" style="left:60px;top:0;width:32px;height:10px;background:#fff"></div></div>
</body></html>
